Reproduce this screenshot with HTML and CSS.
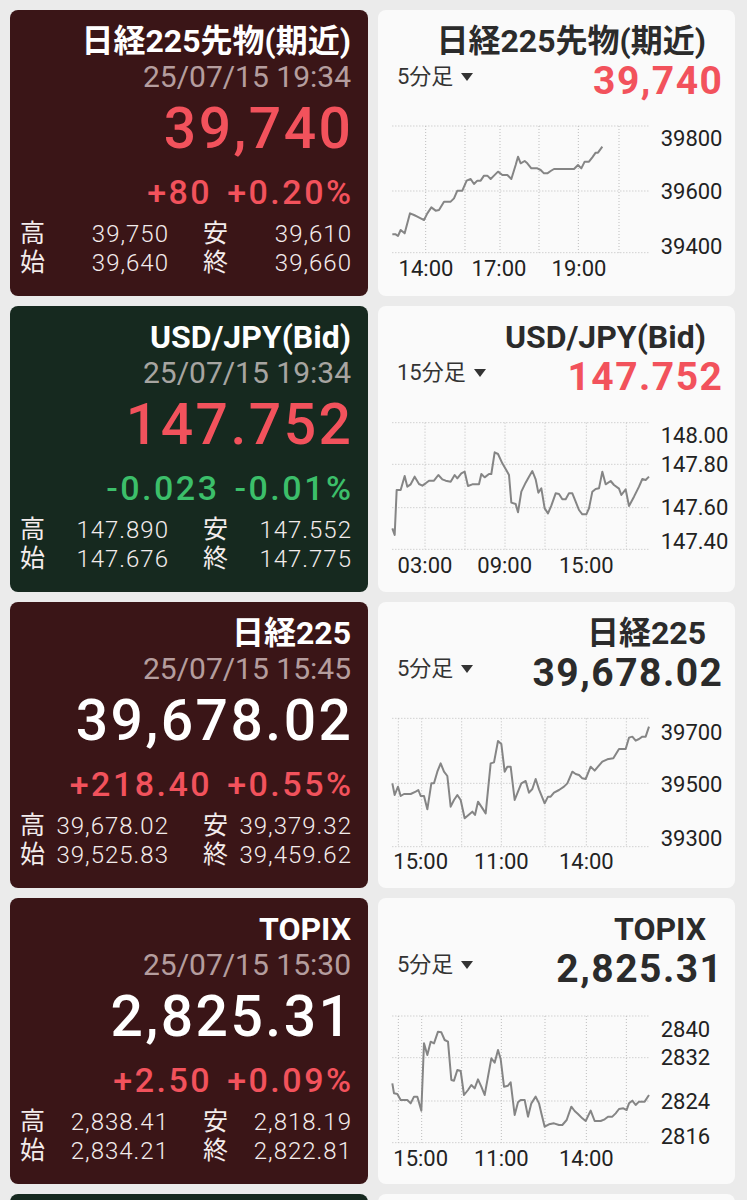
FILE: index.html
```html
<!DOCTYPE html>
<html lang="ja">
<head>
<meta charset="utf-8">
<title>マーケット</title>
<link rel="stylesheet" href="styles.css">
</head>
<body>
<div class="screen">
  <main class="board">

    <!-- Row 1 -->
    <section class="quote maroon">
      <div class="q-title">日経225先物(期近)</div>
      <div class="q-time">25/07/15 19:34</div>
      <div class="q-price up">39,740</div>
      <div class="q-change up"><span>+80</span><span>+0.20%</span></div>
      <div class="q-stats">
        <div class="stat"><span class="stat-label">高</span><span class="stat-val">39,750</span></div>
        <div class="stat"><span class="stat-label">安</span><span class="stat-val">39,610</span></div>
        <div class="stat"><span class="stat-label">始</span><span class="stat-val">39,640</span></div>
        <div class="stat"><span class="stat-label">終</span><span class="stat-val">39,660</span></div>
      </div>
    </section>
    <section class="chart-card">
      <div class="c-head">
        <div class="c-title">日経225先物(期近)</div>
        <div class="c-row">
          <div class="c-period">5分足<span class="caret"></span></div>
          <div class="c-price up">39,740</div>
        </div>
      </div>
      <svg class="chart" viewBox="12 330 1071 558">
        <g class="grid">
          <path d="M55 378H825M55 573H825M55 758H825M155 378V758M273 378V758M378 378V758M495 378V758M613 378V758M735 378V758"/>
        </g>
        <polyline class="line" points="55,703 65,703 72,708 80,690 92,700 108,640 120,645 130,650 140,655 150,660 160,640 172,622 185,632 195,630 210,605 230,605 240,595 250,572 265,572 278,542 290,537 300,552 310,542 320,542 330,527 340,527 350,537 360,527 372,515 385,525 400,525 412,537 425,495 432,470 440,490 452,483 460,490 472,505 490,505 500,510 510,520 520,520 530,513 540,507 560,507 600,507 612,495 622,505 632,485 645,485 655,472 665,458 672,458 685,440"/>
        <g class="ylab">
          <text x="860" y="438">39800</text>
          <text x="860" y="597">39600</text>
          <text x="860" y="763">39400</text>
        </g>
        <g class="xlab">
          <text x="156" y="829">14:00</text>
          <text x="375" y="829">17:00</text>
          <text x="615" y="829">19:00</text>
        </g>
      </svg>
    </section>

    <!-- Row 2 -->
    <section class="quote green">
      <div class="q-title">USD/JPY(Bid)</div>
      <div class="q-time">25/07/15 19:34</div>
      <div class="q-price up">147.752</div>
      <div class="q-change down"><span>-0.023</span><span>-0.01%</span></div>
      <div class="q-stats">
        <div class="stat"><span class="stat-label">高</span><span class="stat-val">147.890</span></div>
        <div class="stat"><span class="stat-label">安</span><span class="stat-val">147.552</span></div>
        <div class="stat"><span class="stat-label">始</span><span class="stat-val">147.676</span></div>
        <div class="stat"><span class="stat-label">終</span><span class="stat-val">147.775</span></div>
      </div>
    </section>
    <section class="chart-card">
      <div class="c-head">
        <div class="c-title">USD/JPY(Bid)</div>
        <div class="c-row">
          <div class="c-period">15分足<span class="caret"></span></div>
          <div class="c-price up">147.752</div>
        </div>
      </div>
      <svg class="chart" viewBox="12 318 1071 558">
        <g class="grid">
          <path d="M55 368H825M55 493H825M55 623H825M55 748H825M153 368V748M273 368V748M393 368V748M513 368V748M637 368V748M757 368V748"/>
        </g>
        <polyline class="line" points="55,685 62,705 68,570 80,570 92,528 100,560 110,553 122,530 135,552 145,557 155,550 165,542 180,542 193,525 205,538 215,542 230,545 242,525 250,535 262,520 272,515 282,558 295,553 315,553 322,522 332,532 345,522 352,522 362,457 372,462 385,490 398,512 405,525 412,608 425,612 432,637 442,575 455,548 465,530 475,513 485,538 493,578 502,565 512,625 522,640 532,617 545,580 555,582 565,598 575,598 585,580 595,580 605,605 615,630 625,643 637,643 645,625 655,575 665,567 675,565 685,515 695,553 710,543 720,555 735,566 742,585 755,568 765,618 780,590 795,560 805,537 815,540 825,530"/>
        <g class="ylab">
          <text x="860" y="428">148.00</text>
          <text x="860" y="516">147.80</text>
          <text x="860" y="646">147.60</text>
          <text x="860" y="748">147.40</text>
        </g>
        <g class="xlab">
          <text x="153" y="820">03:00</text>
          <text x="392" y="820">09:00</text>
          <text x="637" y="820">15:00</text>
        </g>
      </svg>
    </section>

    <!-- Row 3 -->
    <section class="quote maroon">
      <div class="q-title">日経225</div>
      <div class="q-time">25/07/15 15:45</div>
      <div class="q-price">39,678.02</div>
      <div class="q-change up"><span>+218.40</span><span>+0.55%</span></div>
      <div class="q-stats">
        <div class="stat"><span class="stat-label">高</span><span class="stat-val">39,678.02</span></div>
        <div class="stat"><span class="stat-label">安</span><span class="stat-val">39,379.32</span></div>
        <div class="stat"><span class="stat-label">始</span><span class="stat-val">39,525.83</span></div>
        <div class="stat"><span class="stat-label">終</span><span class="stat-val">39,459.62</span></div>
      </div>
    </section>
    <section class="chart-card">
      <div class="c-head">
        <div class="c-title">日経225</div>
        <div class="c-row">
          <div class="c-period">5分足<span class="caret"></span></div>
          <div class="c-price">39,678.02</div>
        </div>
      </div>
      <svg class="chart" viewBox="12 306 1071 558">
        <g class="grid">
          <path d="M55 355H825M55 550H825M55 740H825M73 355V740M143 355V740M263 355V740M382 355V740M513 355V740M637 355V740M757 355V740"/>
        </g>
        <polyline class="line" points="55,550 62,585 72,560 80,588 90,582 110,582 125,575 133,570 140,588 150,588 160,628 172,550 180,550 190,515 200,490 210,515 220,528 230,620 240,600 250,585 260,600 272,655 280,648 295,635 303,645 312,605 322,620 335,640 350,490 360,487 372,423 382,432 392,515 400,500 410,500 422,600 432,575 442,550 455,543 465,578 475,567 485,537 495,568 512,610 522,590 530,590 540,578 555,570 570,560 580,550 595,515 605,522 615,525 625,535 635,537 650,500 662,512 672,500 685,485 700,478 718,475 735,447 755,447 765,413 775,410 785,422 795,417 805,410 815,410 825,380"/>
        <g class="ylab">
          <text x="860" y="421">39700</text>
          <text x="860" y="575">39500</text>
          <text x="860" y="738">39300</text>
        </g>
        <g class="xlab">
          <text x="140" y="808">15:00</text>
          <text x="382" y="808">11:00</text>
          <text x="637" y="808">14:00</text>
        </g>
      </svg>
    </section>

    <!-- Row 4 -->
    <section class="quote maroon">
      <div class="q-title">TOPIX</div>
      <div class="q-time">25/07/15 15:30</div>
      <div class="q-price">2,825.31</div>
      <div class="q-change up"><span>+2.50</span><span>+0.09%</span></div>
      <div class="q-stats">
        <div class="stat"><span class="stat-label">高</span><span class="stat-val">2,838.41</span></div>
        <div class="stat"><span class="stat-label">安</span><span class="stat-val">2,818.19</span></div>
        <div class="stat"><span class="stat-label">始</span><span class="stat-val">2,834.21</span></div>
        <div class="stat"><span class="stat-label">終</span><span class="stat-val">2,822.81</span></div>
      </div>
    </section>
    <section class="chart-card">
      <div class="c-head">
        <div class="c-title">TOPIX</div>
        <div class="c-row">
          <div class="c-period">5分足<span class="caret"></span></div>
          <div class="c-price">2,825.31</div>
        </div>
      </div>
      <svg class="chart" viewBox="12 324 1071 558">
        <g class="grid">
          <path d="M55 378H825M55 503H825M55 633H825M55 758H825M73 378V758M143 378V758M263 378V758M382 378V758M513 378V758M637 378V758M757 378V758"/>
        </g>
        <polyline class="line" points="55,580 60,610 70,612 80,630 100,630 110,640 120,620 130,620 142,662 150,460 160,495 170,455 180,460 192,425 202,427 212,450 222,455 232,570 240,572 250,540 260,543 270,615 282,600 292,585 302,595 312,568 322,590 332,615 342,560 352,505 362,518 372,480 380,507 390,590 402,587 410,577 422,675 432,637 440,630 452,630 462,680 472,640 485,620 495,640 502,670 512,710 525,703 540,700 555,705 565,705 578,690 592,650 602,663 612,672 625,685 635,693 650,662 662,693 680,693 692,688 702,680 715,680 725,670 735,657 748,655 758,660 765,640 775,632 785,645 795,635 812,635 825,615"/>
        <g class="ylab">
          <text x="860" y="441">2840</text>
          <text x="860" y="526">2832</text>
          <text x="860" y="658">2824</text>
          <text x="860" y="761">2816</text>
        </g>
        <g class="xlab">
          <text x="140" y="828">15:00</text>
          <text x="382" y="828">11:00</text>
          <text x="637" y="828">14:00</text>
        </g>
      </svg>
    </section>

    <!-- Row 5 (cut off by the viewport) -->
    <section class="quote green"></section>
    <section class="chart-card"></section>

  </main>
</div>
</body>
</html>
```
FILE: styles.css
```css
* { box-sizing: border-box; }

html, body {
  margin: 0;
  padding: 0;
  background: #ebebeb;
}

.screen {
  width: 747px;
  height: 1200px;
  overflow: hidden;
}

.board {
  display: grid;
  grid-template-columns: 358px 357px;
  grid-auto-rows: 286px;
  column-gap: 10px;
  row-gap: 10px;
  padding: 10px 0 0 10px;
}

/* ---------- left quote cards ---------- */
.quote {
  border-radius: 8px;
  padding: 13px 17px 0 10px;
  color: #ffffff;
  text-align: right;
  font-family: Roboto, "Noto Sans CJK JP", sans-serif;
}
.quote.maroon { background: #3a1517; }
.quote.green  { background: #16291f; }

.q-title {
  font-weight: 700;
  font-size: 32px;
  line-height: 36px;
  white-space: nowrap;
}

.q-time {
  margin-top: 1px;
  font-weight: 400;
  font-size: 30px;
  line-height: 34px;
  color: rgba(255, 240, 240, 0.64);
  white-space: nowrap;
}

.q-price {
  margin-top: 5px;
  margin-right: -2.5px;
  font-weight: 500;
  font-size: 57px;
  line-height: 60px;
  letter-spacing: 2.5px;
  white-space: nowrap;
}

.q-change {
  margin-top: 14px;
  display: flex;
  justify-content: flex-end;
  gap: 15px;
  margin-right: -2.5px;
  font-weight: 500;
  font-size: 34px;
  line-height: 38px;
  letter-spacing: 2.5px;
  white-space: nowrap;
}

.up   { color: #f2525c; }
.down { color: #3cbf6a; }

.q-stats {
  margin-top: 9px;
  display: grid;
  grid-template-columns: 1fr 1fr;
  column-gap: 35px;
  color: #f3ecec;
}

.stat {
  height: 29px;
  display: flex;
  align-items: center;
  justify-content: space-between;
}

.stat-label {
  margin-top: -6px;
  font-family: "Noto Sans CJK JP", sans-serif;
  font-weight: 400;
  font-size: 25px;
  line-height: 25px;
}

.stat-val {
  margin-right: -1px;
  font-weight: 300;
  font-size: 24px;
  line-height: 29px;
  letter-spacing: 1px;
}

/* ---------- right chart cards ---------- */
.chart-card {
  background: #fafafa;
  border-radius: 8px;
  display: flex;
  flex-direction: column;
  font-family: Roboto, "Noto Sans CJK JP", sans-serif;
}

.c-head {
  height: 100px;
  padding-top: 13px;
}

.c-title {
  padding-right: 29px;
  text-align: right;
  font-weight: 700;
  font-size: 32px;
  line-height: 36px;
  color: #2b2b2b;
  white-space: nowrap;
}

.c-row {
  display: flex;
  justify-content: space-between;
  align-items: flex-start;
  padding: 0 13px 0 19px;
}

.c-period {
  margin-top: 5px;
  display: flex;
  align-items: center;
  gap: 8px;
  font-weight: 400;
  font-size: 22px;
  line-height: 26px;
  color: #333333;
}

.caret {
  width: 0;
  height: 0;
  border-left: 6px solid transparent;
  border-right: 6px solid transparent;
  border-top: 8px solid #333333;
}

.c-price {
  margin-right: -1.5px;
  font-weight: 700;
  font-size: 39px;
  line-height: 44px;
  letter-spacing: 1.5px;
  color: #2b2b2b;
  white-space: nowrap;
}
.c-price.up { color: #f2525c; }

.chart {
  display: block;
  width: 357px;
  height: 186px;
}

.chart .grid path {
  fill: none;
  stroke: #bdbdbd;
  stroke-width: 3;
  stroke-dasharray: 3 6;
}

.chart .line {
  fill: none;
  stroke: #858585;
  stroke-width: 6;
  stroke-linejoin: round;
}

.chart text {
  font-family: Roboto, sans-serif;
  font-size: 66px;
  fill: #222222;
}

.chart .xlab text { text-anchor: middle; }
```
